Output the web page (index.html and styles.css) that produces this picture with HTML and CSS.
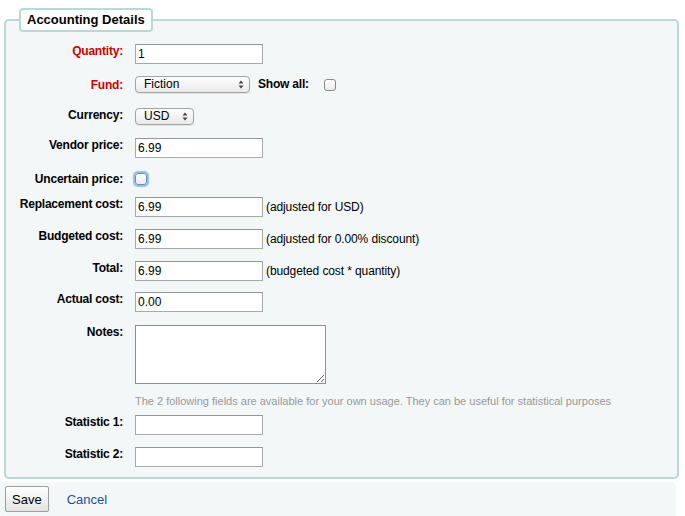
FILE: index.html
```html
<!DOCTYPE html>
<html lang="en">
<head>
<meta charset="utf-8">
<title>Accounting Details</title>
<link rel="stylesheet" href="styles.css">
</head>
<body>
<form class="order-form">
  <fieldset class="panel">
    <legend class="panel-title">Accounting Details</legend>
    <ol class="rows">
      <li class="row">
        <label class="row-label required" for="quantity">Quantity:</label>
        <div class="row-field"><input class="text" id="quantity" type="text" value="1"></div>
      </li>
      <li class="row row-fund">
        <label class="row-label required" for="fund">Fund:</label>
        <div class="row-field">
          <span class="select select-fund">
            <select id="fund"><option>Fiction</option></select>
            <svg class="select-arrows" width="6" height="9" viewBox="0 0 6 9" aria-hidden="true"><polygon points="0.5,3.5 3,0.5 5.5,3.5"/><polygon points="0.5,5.5 3,8.5 5.5,5.5"/></svg>
          </span>
          <label class="inline-label" for="showall">Show all:</label>
          <input class="check" id="showall" type="checkbox">
        </div>
      </li>
      <li class="row row-currency">
        <label class="row-label" for="currency">Currency:</label>
        <div class="row-field">
          <span class="select select-currency">
            <select id="currency"><option>USD</option></select>
            <svg class="select-arrows" width="6" height="9" viewBox="0 0 6 9" aria-hidden="true"><polygon points="0.5,3.5 3,0.5 5.5,3.5"/><polygon points="0.5,5.5 3,8.5 5.5,5.5"/></svg>
          </span>
        </div>
      </li>
      <li class="row row-vendor">
        <label class="row-label" for="vendor">Vendor price:</label>
        <div class="row-field"><input class="text" id="vendor" type="text" value="6.99"></div>
      </li>
      <li class="row row-check">
        <label class="row-label" for="uncertain">Uncertain price:</label>
        <div class="row-field"><input class="check check-focus" id="uncertain" type="checkbox"></div>
      </li>
      <li class="row">
        <label class="row-label" for="replacement">Replacement cost:</label>
        <div class="row-field"><input class="text" id="replacement" type="text" value="6.99"><span class="note">(adjusted for USD)</span></div>
      </li>
      <li class="row">
        <label class="row-label" for="budgeted">Budgeted cost:</label>
        <div class="row-field"><input class="text" id="budgeted" type="text" value="6.99"><span class="note">(adjusted for 0.00% discount)</span></div>
      </li>
      <li class="row row-total">
        <label class="row-label" for="total">Total:</label>
        <div class="row-field"><input class="text" id="total" type="text" value="6.99"><span class="note">(budgeted cost * quantity)</span></div>
      </li>
      <li class="row row-actual">
        <label class="row-label" for="actual">Actual cost:</label>
        <div class="row-field"><input class="text" id="actual" type="text" value="0.00"></div>
      </li>
      <li class="row row-notes">
        <label class="row-label" for="notes">Notes:</label>
        <div class="row-field"><textarea class="notes" id="notes"></textarea></div>
      </li>
      <li class="hint">The 2 following fields are available for your own usage. They can be useful for statistical purposes</li>
      <li class="row">
        <label class="row-label" for="stat1">Statistic 1:</label>
        <div class="row-field"><input class="text" id="stat1" type="text"></div>
      </li>
      <li class="row row-last">
        <label class="row-label" for="stat2">Statistic 2:</label>
        <div class="row-field"><input class="text" id="stat2" type="text"></div>
      </li>
    </ol>
  </fieldset>
  <div class="actions">
    <button class="btn" type="button">Save</button>
    <a class="cancel" href="#">Cancel</a>
  </div>
</form>
</body>
</html>
```
FILE: styles.css
```css
html, body {
  margin: 0;
  background: #fff;
}

body {
  font-family: "Liberation Sans", Arial, sans-serif;
  font-size: 12px;
  color: #000;
}

.order-form {
  margin: 0;
}

.panel {
  margin: 8px 6px 0 4px;
  padding: 0 0 10px;
  border: 2px solid #b9d8d9;
  border-radius: 5px;
  background: #f3f7f8;
  min-width: 0;
}

.panel-title {
  margin-left: 13px;
  padding: 2px 6px;
  border: 2px solid #b9d8d9;
  border-radius: 4px;
  background: #fff;
  font-size: 13px;
  font-weight: bold;
  line-height: 16px;
}

.rows {
  list-style: none;
  margin: 0;
  padding: 12px 0 0;
  display: flex;
  flex-direction: column;
}

.row {
  display: flex;
  align-items: flex-start;
  gap: 12px;
  min-height: 20px;
  margin-bottom: 12px;
}

.row-currency { margin-bottom: 10px; }
.row-vendor { margin-bottom: 14px; }
.row-check { min-height: 13px; margin-bottom: 10px; }
.row-total { margin-bottom: 11px; }
.row-actual { margin-bottom: 13px; }
.row-notes { margin-bottom: 10px; }
.row-last { margin-bottom: 0; }

.row-label {
  flex: none;
  width: 117px;
  text-align: right;
  font-weight: bold;
  line-height: 15px;
  letter-spacing: -0.2px;
}

.row-fund .row-label {
  padding-top: 2px;
}

.required {
  color: #cc0000;
}

.row-field {
  display: flex;
  align-items: center;
}

.text {
  box-sizing: border-box;
  width: 128px;
  height: 20px;
  margin: 0;
  padding: 0 2px;
  border: 1px solid #a9a9a9;
  border-top-color: #959595;
  background: #fff;
  font-family: "Liberation Sans", Arial, sans-serif;
  font-size: 12px;
  color: #000;
  outline: none;
}

.note {
  margin-left: 3px;
  line-height: 15px;
  letter-spacing: -0.1px;
}

.notes {
  box-sizing: border-box;
  width: 191px;
  height: 59px;
  margin: 0;
  padding: 2px;
  border: 1px solid #8f8f8f;
  background: #fff;
  font-family: "Liberation Sans", Arial, sans-serif;
  font-size: 12px;
}

.select {
  position: relative;
  display: inline-flex;
}

.select select {
  box-sizing: border-box;
  -webkit-appearance: none;
  appearance: none;
  height: 17px;
  margin: 0;
  padding: 0 0 0 8px;
  border: 1px solid #a3a3a3;
  border-radius: 4px;
  background: linear-gradient(#ffffff, #f4f4f4 50%, #e9e9e9);
  box-shadow: 0 1px 1px rgba(0, 0, 0, 0.08);
  font-family: "Liberation Sans", Arial, sans-serif;
  font-size: 12px;
  line-height: 15px;
  color: #000;
}

.select-fund select { width: 115px; }
.select-currency select { width: 59px; }

.select-arrows {
  position: absolute;
  right: 6px;
  top: 4px;
  fill: #444;
  pointer-events: none;
}

.inline-label {
  margin: 0 15px 0 8px;
  font-weight: bold;
  line-height: 15px;
  letter-spacing: -0.2px;
}

.check {
  box-sizing: border-box;
  -webkit-appearance: none;
  appearance: none;
  width: 12px;
  height: 12px;
  margin: 0;
  border: 1px solid #8a8a8a;
  border-radius: 3px;
  background: linear-gradient(#ffffff, #ececec);
}

.check-focus {
  margin-top: 1px;
  border-color: #5e8fc9;
  box-shadow: 0 0 1px 2px rgba(92, 150, 218, 0.6);
}

.hint {
  padding-left: 129px;
  margin-bottom: 7px;
  font-size: 11px;
  line-height: 14px;
  color: #999;
}

.actions {
  display: flex;
  align-items: center;
  gap: 18px;
  margin: 3px 9px 0 0;
  padding: 4px 5px 6px;
  border-radius: 5px;
  background: #f3f7f8;
}

.btn {
  box-sizing: border-box;
  height: 26px;
  margin: 0;
  padding: 0 6px;
  border: 1px solid #9d9d9d;
  border-radius: 2px;
  background: linear-gradient(#ffffff, #e4e4e4);
  font-family: "Liberation Sans", Arial, sans-serif;
  font-size: 13px;
  color: #000;
}

.cancel {
  font-size: 13px;
  color: #1f4f9c;
  text-decoration: none;
}
```
